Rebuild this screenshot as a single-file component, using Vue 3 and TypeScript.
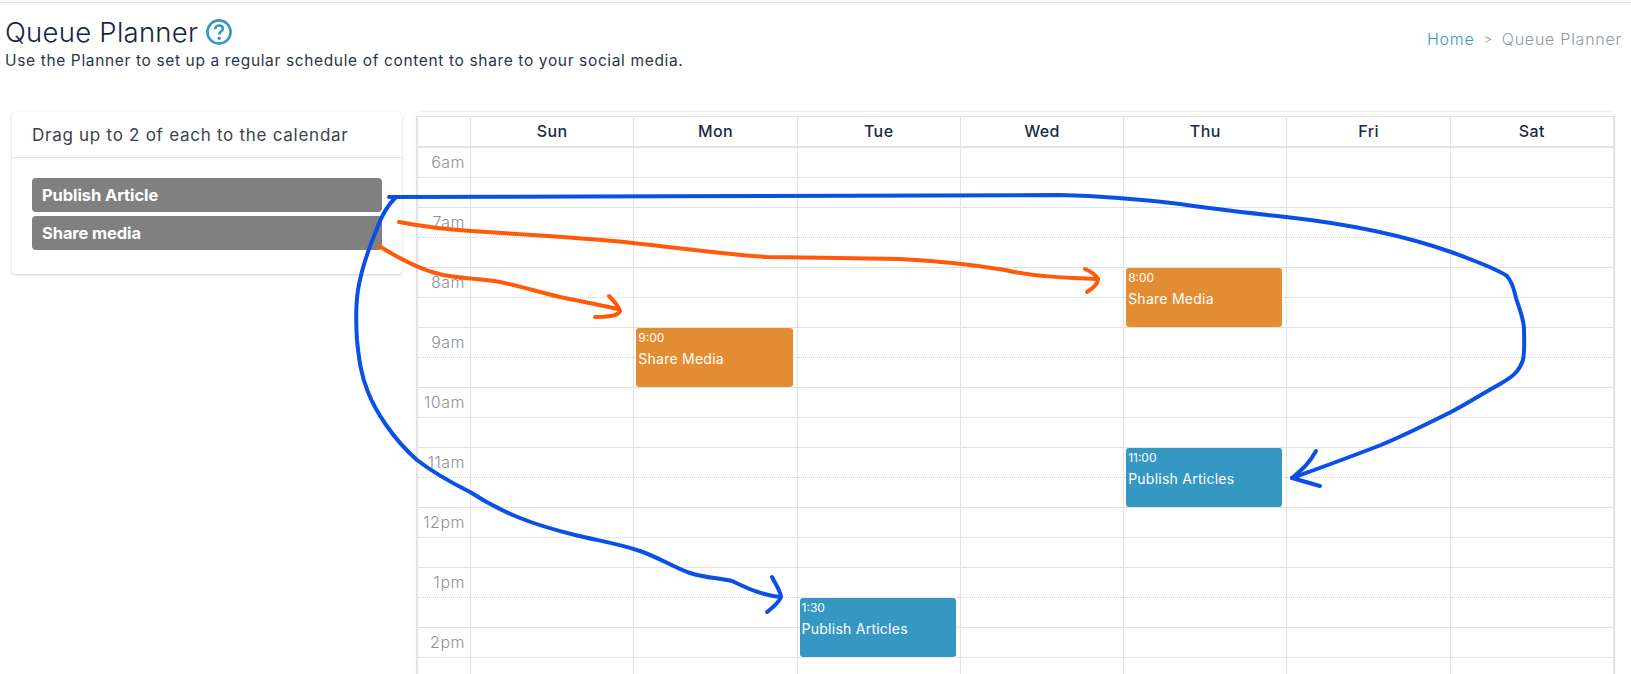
<script setup lang="ts">
interface CalEvent { day: number; top: number; time: string; title: string; kind: string }
const days: string[] = ['Sun', 'Mon', 'Tue', 'Wed', 'Thu', 'Fri', 'Sat']
const hours: string[] = ['6am', '7am', '8am', '9am', '10am', '11am', '12pm', '1pm', '2pm']
const events: CalEvent[] = [
  { day: 1, top: 180, time: '9:00', title: 'Share Media', kind: 'orange' },
  { day: 4, top: 120, time: '8:00', title: 'Share Media', kind: 'orange' },
  { day: 4, top: 300, time: '11:00', title: 'Publish Articles', kind: 'blue' },
  { day: 2, top: 450, time: '1:30', title: 'Publish Articles', kind: 'blue' }
]
const eventsFor = (d: number) => events.filter((e) => e.day === d)
</script>

<template>
  <div class="page">
    <header class="head">
      <div>
        <h1 class="title">
          Queue Planner
          <svg class="help" viewBox="0 0 26 26" width="26" height="26">
            <circle cx="13" cy="13" r="11.6" fill="none" stroke="#3498c3" stroke-width="2.6" />
            <path d="M9.2 10.2c0-2.3 1.7-3.7 3.9-3.7s3.7 1.3 3.7 3.2c0 1.6-.9 2.4-2.1 3.2-1 .7-1.5 1.2-1.5 2.6" fill="none" stroke="#3498c3" stroke-width="2.6" />
            <circle cx="13.2" cy="19.2" r="1.7" fill="#3498c3" />
          </svg>
        </h1>
        <p class="sub">Use the Planner to set up a regular schedule of content to share to your social media.</p>
      </div>
      <nav class="crumbs"><span class="home">Home</span><span class="sep">&gt;</span><span>Queue Planner</span></nav>
    </header>

    <main class="main">
      <aside class="palette">
        <div class="palette-head">Drag up to 2 of each to the calendar</div>
        <div class="palette-body">
          <div class="chip">Publish Article</div>
          <div class="chip">Share media</div>
        </div>
      </aside>

      <section class="calendar">
        <div class="table">
          <div class="cal-head">
            <div class="corner"></div>
            <div v-for="d in days" :key="d" class="day-name">{{ d }}</div>
          </div>
          <div class="cal-body">
            <div class="axis">
              <div v-for="h in hours" :key="h" class="hour">
                <div class="half"><span class="label">{{ h }}</span></div>
              </div>
            </div>
            <div v-for="(d, i) in days" :key="d" class="day">
              <div v-for="h in hours" :key="h" class="hour"><div class="half"></div></div>
              <div
                v-for="e in eventsFor(i)"
                :key="e.time"
                class="event"
                :class="e.kind"
                :style="{ top: e.top + 'px' }"
              >
                <div class="ev-time">{{ e.time }}</div>
                <div class="ev-title">{{ e.title }}</div>
              </div>
            </div>
          </div>
        </div>
      </section>
    </main>

    <svg class="ink" width="1631" height="674" viewBox="0 0 1631 674">
      <g fill="none" stroke-width="4" stroke-linecap="round" stroke-linejoin="round">
        <g stroke="#0a50e6">
          <path d="M389 197C600 197 900 195 1060 195C1100 196 1130 198 1180 204C1220 210 1260 214 1286 217C1340 223 1400 234 1451 252C1475 261 1495 268 1507 276C1513 283 1514 290 1516 298C1519 308 1523 316 1524 328C1524 340 1525 350 1523 360C1519 372 1512 377 1500 384C1480 395 1465 405 1451 412C1425 425 1405 435 1381 445C1350 457 1320 468 1292 478" />
          <path d="M1316 451C1310 462 1304 468 1292 478L1320 486" />
          <path d="M396 197C388 205 383 212 378 226C370 245 362 265 358 290C355 310 356 325 357 340C359 360 361 375 368 392C375 410 392 438 417 460C435 474 452 483 470 492C490 505 505 512 520 518C540 526 555 530 575 535C600 541 620 544 640 551C660 558 675 568 690 573C705 578 720 578 732 581C745 587 760 595 781 597" />
          <path d="M772 577C776 585 780 590 781 597C778 604 772 608 767 612" />
        </g>
        <g stroke="#ff5a0a">
          <path d="M399 222C420 226 440 229 471 231C530 235 590 238 633 243C680 248 720 254 767 257C810 258 860 258 900 259C940 261 975 265 1005 270C1030 276 1060 278 1098 279" />
          <path d="M1085 269C1092 272 1096 275 1098 279C1098 284 1092 289 1087 292" />
          <path d="M379 246C395 256 420 270 443 275C465 279 485 279 500 282C520 286 535 291 560 297C580 301 600 305 618 309" />
          <path d="M609 296C614 301 618 305 620 311C618 316 610 317 595 317" />
        </g>
      </g>
    </svg>
  </div>
</template>

<style>
html, body { margin: 0; background: #fff; }
</style>

<style scoped>
.page {
  position: relative;
  height: 674px;
  width: 1631px;
  overflow: hidden;
  box-sizing: border-box;
  border-top: 1px solid #e4e4ec;
  margin-top: 2px;
  font-family: Inter, "Liberation Sans", sans-serif;
  color: #1c2b45;
  background: #fff;
}
.head {
  display: flex;
  justify-content: space-between;
  padding: 0 9px 0 5px;
  height: 109px;
}
.title {
  display: flex;
  align-items: center;
  gap: 8px;
  margin: 14px 0 0;
  height: 30px;
  font-size: 27.5px;
  font-weight: 300;
  line-height: 30px;
  letter-spacing: 0.25px;
  color: #162744;
}
.help { flex: none; }
.sub {
  margin: 2px 0 0;
  font-size: 15.5px;
  line-height: 24px;
  letter-spacing: 0.64px;
  color: #2b3648;
}
.crumbs {
  display: flex;
  gap: 9px;
  margin-top: 26px;
  height: 20px;
  font-size: 16px;
  line-height: 20px;
  letter-spacing: 0.75px;
  font-weight: 300;
  color: #8f9aa3;
}
.home { color: #3498c3; }
.sep { font-size: 13px; }
.main {
  display: flex;
  align-items: flex-start;
  gap: 14px;
  padding-left: 12px;
}
.palette {
  width: 390px;
  height: 162px;
  flex: none;
  box-sizing: border-box;
  background: #fff;
  border-radius: 4px;
  box-shadow: 0 1px 3px rgba(0, 0, 0, 0.2);
}
.palette-head {
  height: 46px;
  box-sizing: border-box;
  border-bottom: 1px solid #e2e2e2;
  padding: 0 20px;
  font-size: 17px;
  line-height: 46px;
  letter-spacing: 0.73px;
  color: #3a4350;
}
.palette-body {
  display: flex;
  flex-direction: column;
  gap: 4px;
  padding: 20px 20px 0;
}
.chip {
  height: 34px;
  padding-left: 10px;
  border-radius: 4px;
  background: #808080;
  color: #fff;
  font-size: 16.5px;
  font-weight: 700;
  line-height: 34px;
  letter-spacing: -0.1px;
}
.calendar {
  width: 1199px;
  flex: none;
  padding-top: 5px;
  border-radius: 5px 5px 0 0;
  box-shadow: 0 -1px 2px rgba(0, 0, 0, 0.08);
}
.table {
  border-top: 1px solid #dfe2e6;
  border-left: 2px solid #e2e4e8;
  border-right: 2px solid #e2e4e8;
  box-sizing: border-box;
  margin-top: -1px;
}
.cal-head, .cal-body {
  display: grid;
  grid-template-columns: 52px repeat(7, 1fr);
}
.cal-head {
  height: 29px;
  border-bottom: 2px solid #dfe2e6;
  box-sizing: content-box;
}
.day-name {
  border-left: 1px solid #dfe2e6;
  text-align: center;
  font-size: 16px;
  font-weight: 500;
  line-height: 28px;
  letter-spacing: 0.4px;
  color: #1c2b45;
}
.day {
  position: relative;
  border-left: 1px solid #dfe2e6;
}
.hour {
  height: 60px;
  box-sizing: border-box;
  border-bottom: 1px solid #e0e0e0;
}
.half {
  height: 30px;
  box-sizing: border-box;
  border-bottom: 1px dotted #d4d4d4;
}
.label {
  display: block;
  padding-right: 5px;
  text-align: right;
  font-size: 16px;
  line-height: 28px;
  font-weight: 300;
  letter-spacing: 0.5px;
  color: #8f9295;
}
.event {
  position: absolute;
  left: 2px;
  right: 4px;
  height: 59px;
  box-sizing: border-box;
  padding: 2px;
  border-radius: 3px;
  color: #fff;
}
.orange { background: #e28d33; }
.blue { background: #3498c3; }
.ev-time {
  font-size: 12px;
  line-height: 15px;
}
.ev-title {
  margin-top: 4px;
  font-size: 14px;
  line-height: 20px;
  letter-spacing: 0.25px;
}
.ink {
  position: absolute;
  left: 0;
  top: -3px;
  pointer-events: none;
}
</style>
